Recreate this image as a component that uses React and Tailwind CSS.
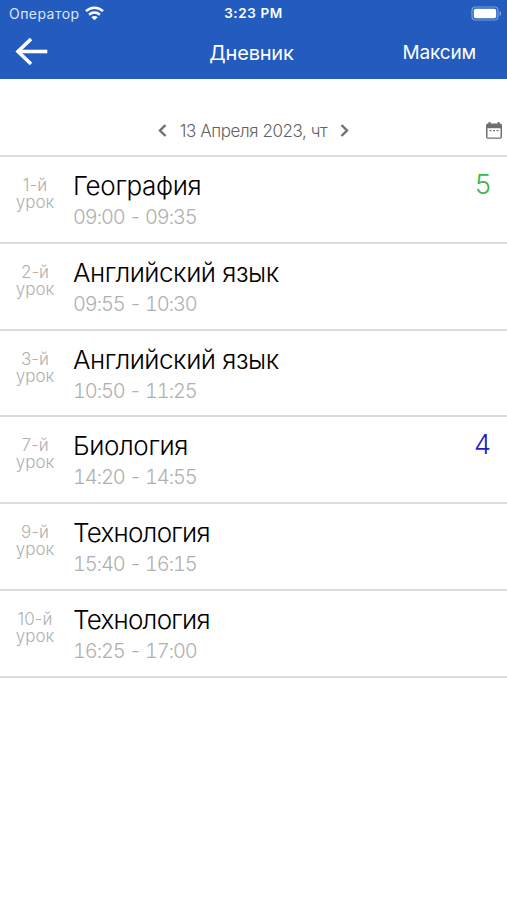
const lessons = [
  { number: 1, name: 'География', time: '09:00 - 09:35', mark: 5, tracking: 'tracking-[-0.35px]' },
  { number: 2, name: 'Английский язык', time: '09:55 - 10:30', tracking: 'tracking-[-0.48px]' },
  { number: 3, name: 'Английский язык', time: '10:50 - 11:25', tracking: 'tracking-[-0.48px]' },
  { number: 7, name: 'Биология', time: '14:20 - 14:55', mark: 4, tracking: 'tracking-[-0.4px]' },
  { number: 9, name: 'Технология', time: '15:40 - 16:15', tracking: 'tracking-[-0.75px]' },
  { number: 10, name: 'Технология', time: '16:25 - 17:00', tracking: 'tracking-[-0.75px]' },
];

function WifiIcon() {
  return (
    <svg className="ml-[5px] h-[15px] w-[19px]" viewBox="0 0 19 15" fill="none" stroke="white" strokeWidth="2.5">
      <path d="M1 5.2C5.9.5 13.1.5 18 5.2" />
      <path d="M4.1 8.7c3.1-2.8 7.7-2.8 10.8 0" />
      <path d="M9.5 14.2 6.3 11.2c1.8-1.6 4.6-1.6 6.4 0z" fill="white" stroke="none" />
    </svg>
  );
}

function BatteryIcon() {
  return (
    <svg className="h-[15px] w-[31px]" viewBox="0 0 31 15">
      <rect x="1" y="1" width="26" height="13" rx="3.5" fill="none" stroke="#7f9fd9" strokeWidth="1.2" />
      <rect x="2.8" y="2.8" width="22.4" height="9.4" rx="1.8" fill="white" />
      <path d="M28.6 5v5c2-.8 2-4.2 0-5z" fill="#8eaadd" />
    </svg>
  );
}

function Header() {
  return (
    <header className="h-[79px] bg-[#235bbf] text-white">
      <div className="grid h-[27px] grid-cols-3 items-center">
        <div className="flex items-center pl-[9px]">
          <span className="text-[14px] tracking-[0.45px] text-[#dbe6fa]">Оператор</span>
          <WifiIcon />
        </div>
        <span className="text-center text-[13.5px] font-semibold tracking-[0.6px]">3:23 PM</span>
        <div className="flex justify-end pr-[5px]">
          <BatteryIcon />
        </div>
      </div>
      <div className="grid h-[52px] grid-cols-3 items-center">
        <button className="pl-[14px]">
          <svg className="h-[30px] w-[35px]" viewBox="0 0 35 30" fill="none" stroke="white" strokeWidth="3.6">
            <path d="M33.3 13.5H4" />
            <path d="M17 1 4 13.5 17 26" />
          </svg>
        </button>
        <h1 className="pr-[4px] text-center text-[20px] tracking-[-0.2px]">Дневник</h1>
        <span className="pr-[31px] pt-px text-right text-[19px] tracking-[-0.15px]">Максим</span>
      </div>
    </header>
  );
}

function DateBar() {
  return (
    <div className="grid h-[77px] grid-cols-[1fr_auto_1fr] items-center pt-[26px] text-[#6b7075]">
      <span />
      <div className="flex items-center">
        <svg className="h-[14px] w-[9px]" viewBox="0 0 9 14" fill="none" stroke="currentColor" strokeWidth="2.4">
          <path d="M7.5 1 2 6.5 7.5 12" />
        </svg>
        <span className="mx-[13px] text-[17px] leading-[20px] font-light tracking-[-0.42px] whitespace-nowrap text-[#626262]">
          13 Апреля 2023, чт
        </span>
        <svg className="h-[14px] w-[9px]" viewBox="0 0 9 14" fill="none" stroke="currentColor" strokeWidth="2.4">
          <path d="M1.5 1 7 6.5 1.5 12" />
        </svg>
      </div>
      <svg className="mr-[5px] mb-px h-[17px] w-[16px] justify-self-end" viewBox="0 0 16 17">
        <path
          d="M2.5 0h2v1.5h7V0h2v1.5h.7A1.8 1.8 0 0 1 16 3.300V15a1.800 1.800 0 0 1-1.800 1.800H1.800A1.800 1.800 0 0 1 0 15V3.300a1.800 1.800 0 0 1 1.800-1.800h.7zM1.500 6.200v9.200h13V6.200z"
          fill="currentColor"
          fillRule="evenodd"
        />
        <path d="M3.500 8.700h2M7 8.700h2M10.500 8.700h2" stroke="currentColor" strokeWidth="1.3" />
      </svg>
    </div>
  );
}

function Lesson({ lesson }) {
  return (
    <li className="flex h-[86.8px] border-b-2 border-[#dcdcdc] font-light">
      <div className="w-[70px] pt-[20px] text-center text-[17px] leading-[17px] text-[#b0b0b0]">
        <p>{`${lesson.number}-й`}</p>
        <p>урок</p>
      </div>
      <div className="flex-1 pl-[3px] pt-[12px]">
        <h2 className={`text-[26px] leading-[34px] text-black ${lesson.tracking}`}>{lesson.name}</h2>
        <p className="text-[20px] leading-[28px] tracking-[-1.1px] tabular-nums text-[#b0b0b0]">{lesson.time}</p>
      </div>
      {lesson.mark && (
        <span className={`pr-[16px] pt-[11px] text-[27px] leading-[34px] ${lesson.mark === 5 ? 'text-[#3cb54a]' : 'text-[#1d1dc8]'}`}>
          {lesson.mark}
        </span>
      )}
    </li>
  );
}

function App() {
  return (
    <div className="min-h-screen overflow-hidden bg-white font-['Inter','Liberation_Sans',sans-serif]">
      <Header />
      <DateBar />
      <ul className="-mt-px border-t-2 border-[#dcdcdc]">
        {lessons.map((lesson) => (
          <Lesson key={lesson.number} lesson={lesson} />
        ))}
      </ul>
    </div>
  );
}

export default App;
